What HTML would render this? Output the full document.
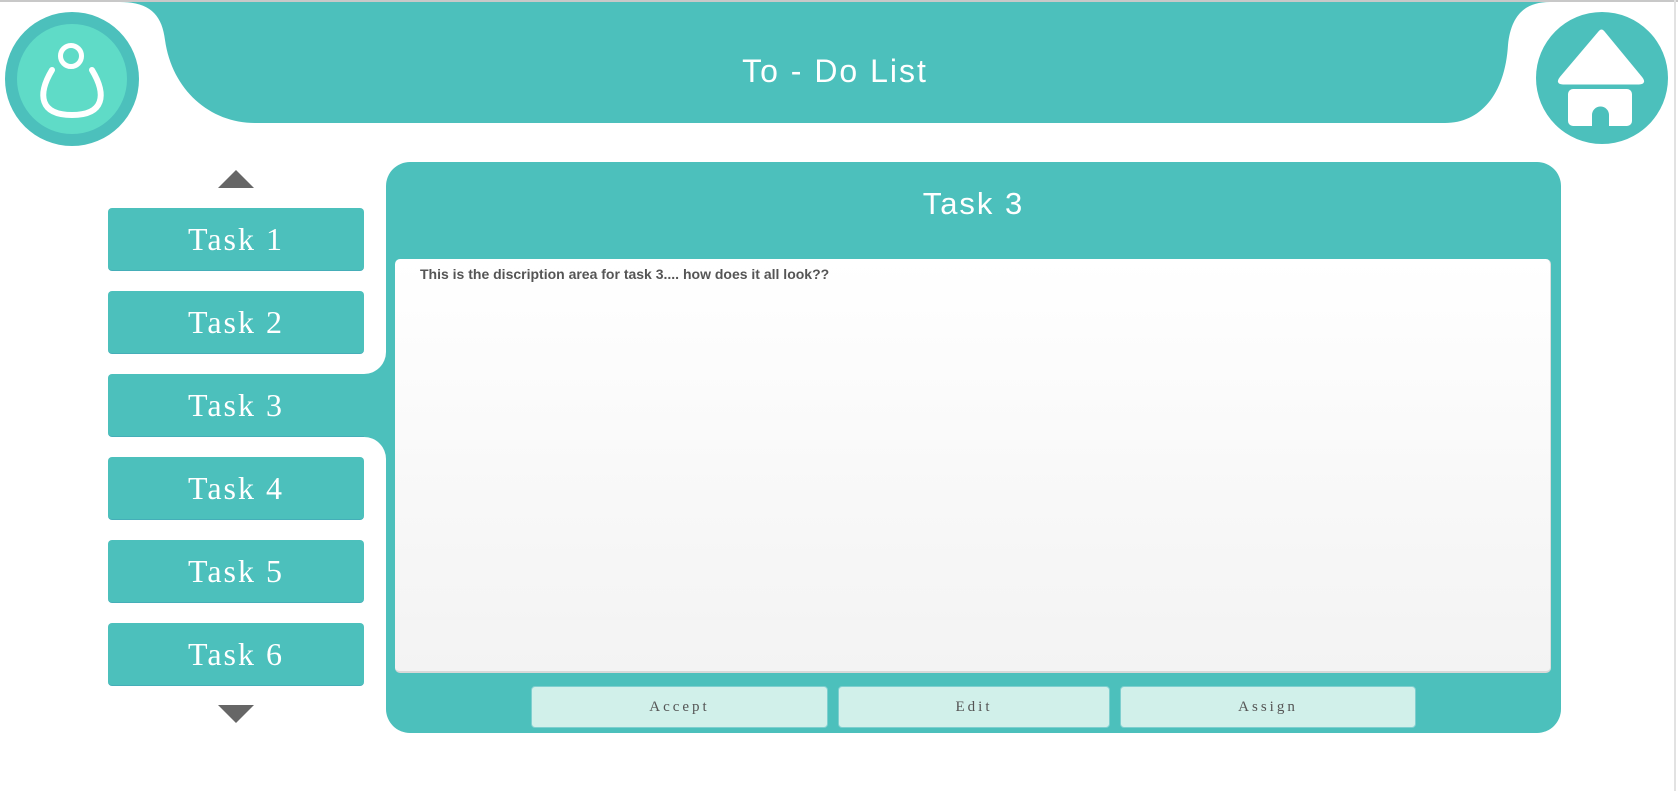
<!DOCTYPE html>
<html><head><meta charset="utf-8"><style>
*{margin:0;padding:0;box-sizing:border-box}
body{width:1678px;height:791px;overflow:hidden;background:#fff;position:relative;font-family:"Liberation Sans",Arial,sans-serif}
.abs{position:absolute}
.task{position:absolute;left:108px;width:256px;height:63px;background:#4cc0bc;border-radius:4px;border-bottom:1px solid #45aeb8;color:#fff;font-family:"Liberation Serif",serif;font-size:32px;letter-spacing:2px;text-align:center;line-height:62px}
.btn{position:absolute;top:686px;height:42px;background:#d1f0ea;border-radius:4px;border:1px solid #7ecfcf;font-family:"Liberation Serif",serif;font-size:15px;letter-spacing:3px;color:#555;text-align:center;line-height:40px}
</style></head><body>
<div class="abs" style="left:0;top:0;width:1678px;height:2px;background:#c8c8c8"></div>
<div class="abs" style="left:1674px;top:0;width:2px;height:791px;background:#e2e2e2"></div>
<svg class="abs" style="left:0;top:0" width="1678" height="160">
<path d="M120,2 C150,2 162,15 165,40 C172,90 210,123 255,123 L1445,123 C1480,123 1505,95 1508,45 C1511,15 1525,2 1550,2 Z" fill="#4cc0bc"/>
<circle cx="72" cy="79" r="67" fill="#4cc0bc"/>
<circle cx="72" cy="79" r="55" fill="#5fdbc7"/>
<circle cx="71" cy="56" r="10.5" fill="none" stroke="#fff" stroke-width="5"/>
<path d="M52,70 C37,95 40,115 72,115 C104,115 107,95 92,70" fill="none" stroke="#fff" stroke-width="6" stroke-linecap="round"/>
<circle cx="1602" cy="78" r="66" fill="#4cc0bc"/>
<path d="M1600,32 L1561,78 Q1557,83 1563,83 L1639,83 Q1645,83 1641,78 L1603,32 Q1601.5,30 1600,32 Z" fill="#fff" stroke="#fff" stroke-width="3" stroke-linejoin="round"/>
<rect x="1568" y="89" width="64" height="37" rx="5" fill="#fff"/>
<path d="M1592,126 L1592,115 A8.5,8.5 0 0 1 1609,115 L1609,126 Z" fill="#4cc0bc"/>
<text x="835" y="82" font-family="Liberation Sans,Arial,sans-serif" font-size="32" fill="#fff" text-anchor="middle" letter-spacing="2">To - Do List</text>
</svg>
<svg class="abs" style="left:218px;top:170px" width="36" height="18"><path d="M0,18 L18,0 L36,18Z" fill="#666"/></svg>
<svg class="abs" style="left:218px;top:705px" width="36" height="18"><path d="M0,0 L36,0 L18,18Z" fill="#666"/></svg>
<div class="task" style="top:208px">Task 1</div>
<div class="task" style="top:291px">Task 2</div>
<div class="task" style="top:374px;width:290px;border-radius:4px 0 0 4px;padding-right:34px">Task 3</div>
<div class="abs" style="left:364px;top:352px;width:24px;height:24px;background:#4cc0bc"></div>
<div class="abs" style="left:364px;top:352px;width:22px;height:22px;background:#fff;border-bottom-right-radius:22px"></div>
<div class="abs" style="left:364px;top:435px;width:24px;height:24px;background:#4cc0bc"></div>
<div class="abs" style="left:364px;top:437px;width:22px;height:22px;background:#fff;border-top-right-radius:22px"></div>
<div class="task" style="top:457px">Task 4</div>
<div class="task" style="top:540px">Task 5</div>
<div class="task" style="top:623px">Task 6</div>
<div class="abs" style="left:386px;top:162px;width:1175px;height:571px;background:#4cc0bc;border-radius:24px"></div>
<div class="abs" style="left:386px;top:186px;width:1175px;text-align:center;color:#fff;font-size:31px;letter-spacing:2px">Task 3</div>
<div class="abs" style="left:395px;top:259px;width:1156px;height:414px;border-radius:5px;background:linear-gradient(#fff,#f3f3f3);border-bottom:2px solid #d8d8d8;border-right:1px solid #ddd"></div>
<div class="abs" style="left:420px;top:266px;font-size:14px;font-weight:bold;color:#555">This is the discription area for task 3.... how does it all look??</div>
<div class="btn" style="left:531px;width:297px">Accept</div>
<div class="btn" style="left:838px;width:272px">Edit</div>
<div class="btn" style="left:1120px;width:296px">Assign</div>
</body></html>
